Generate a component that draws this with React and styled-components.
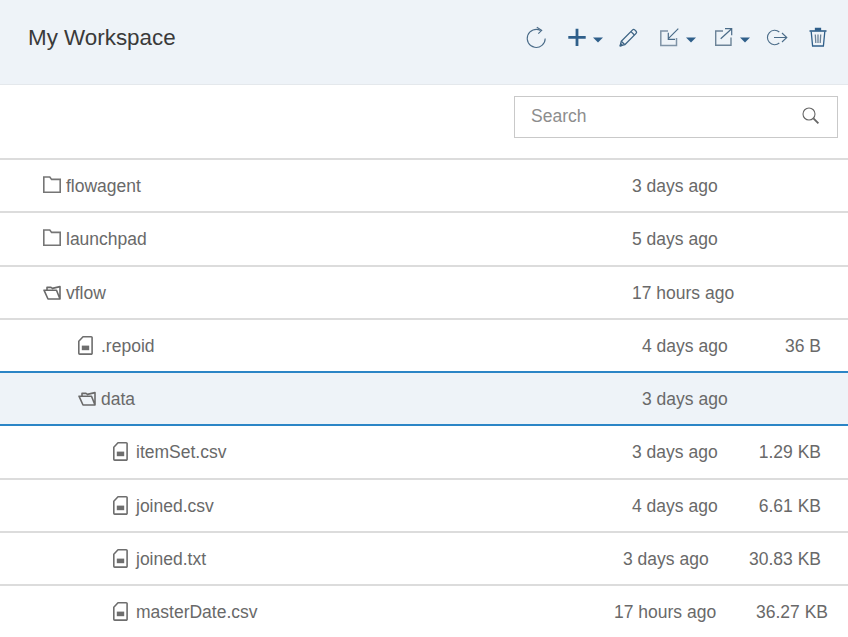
import React from "react";
import styled, { createGlobalStyle } from "styled-components";

const Global = createGlobalStyle`
  html, body { margin: 0; padding: 0; background: #fff; overflow: hidden; }
  body { font-family: "Liberation Sans", Arial, sans-serif; }
`;
const Page = styled.div`
  width: 848px; height: 637px; overflow: hidden; background: #fff;
`;
const Header = styled.header`
  height: 85px; box-sizing: border-box; background: #eef3f8;
  border-bottom: 1px solid #e4e8ec;
  display: flex; align-items: flex-start; justify-content: space-between;
  padding: 0 20px 0 28px;
`;
const Title = styled.h1`
  margin: 24px 0 0; font-size: 22.4px; line-height: 27px; font-weight: 400; color: #3a3a3a;
`;
const Toolbar = styled.div`
  display: flex; align-items: center; height: 20px; margin-top: 28px;
`;
const ToolButton = styled.span`
  display: inline-flex; align-items: center; margin-left: ${p => p.$gap || 0}px;
  svg { display: block; overflow: visible; }
`;
const CaretButton = styled(ToolButton)`
  margin-top: 4px;
`;
const SearchBar = styled.div`
  height: 75px; box-sizing: border-box; display: flex; justify-content: flex-end; align-items: flex-start;
  padding: 11px 10px 0 0; border-bottom: 2px solid #dcdcdc;
`;
const SearchBox = styled.div`
  width: 324px; height: 42px; box-sizing: border-box; border: 1px solid #c9c9c9;
  display: flex; align-items: center; justify-content: space-between; padding: 0 17px 2px 16px;
`;
const SearchInput = styled.input`
  border: 0; outline: 0; padding: 0; flex: 1; min-width: 0; background: transparent;
  font: 400 17.5px "Liberation Sans", Arial, sans-serif; color: #666;
  &::placeholder { color: #8d8d8d; opacity: 1; }
`;
const List = styled.div``;
const Row = styled.div`
  height: 53.25px; box-sizing: border-box; display: flex; align-items: center;
  padding-top: 2px; font-size: 17.5px; color: #696969;
  background: ${p => (p.$selected ? "#eef3f8" : "#fff")};
  border-bottom: 2px solid ${p => (p.$selected ? "#2b85c6" : "#dcdcdc")};
  ${p => p.$beforeSelected && "border-bottom-color: #2b85c6;"}
`;
const NameCell = styled.div`
  width: ${p => p.$dateX}px; flex: none; box-sizing: border-box; display: flex; align-items: center;
  padding-left: ${p => 43 + p.$depth * 35}px; white-space: nowrap;
  svg { display: block; flex: none; margin: 0 5px 3px 0; }
`;
const DateCell = styled.div`
  flex: none; white-space: nowrap;
`;
const SizeCell = styled.div`
  flex: 1; text-align: right; white-space: nowrap; padding-right: ${p => p.$right}px;
`;

const Caret = () => (
  <svg width="12" height="6" viewBox="0 0 12 6"><path d="M1 0.5h10L6 5.5z" fill="#2f5f8a" /></svg>
);
const Refresh = () => (
  <svg width="20" height="20" viewBox="0 0 20 20" fill="none" stroke="#4a6b88" strokeWidth="1.1">
    <path d="M13.6 2.6A9 9 0 1 0 18.2 10.5" />
    <path d="M9.8 -0.8L14.7 2.4 11.3 5.7" />
  </svg>
);
const Plus = () => (
  <svg width="22" height="20" viewBox="0 0 22 20" fill="none" stroke="#2f5f8a" strokeWidth="2.8">
    <path d="M2.3 9.3h17.4M11 .7V18" />
  </svg>
);
const Pencil = () => (
  <svg width="20" height="20" viewBox="0 0 20 20" fill="none" stroke="#3d6485" strokeWidth="1.3" strokeLinejoin="round">
    <path d="M2.2 17.8l1.1-4.6L14.6 1.9a1.5 1.5 0 0 1 2.1 0l1.4 1.4a1.5 1.5 0 0 1 0 2.1L6.8 16.7z" />
    <path d="M13 3.6l3.4 3.4M3.3 13.2l3.5 3.5" />
    <path d="M2.2 17.8l2-.5-1.5-1.5z" fill="#3d6485" />
  </svg>
);
const ImportIcon = () => (
  <svg width="20" height="20" viewBox="0 0 20 20" fill="none" strokeWidth="1.5">
    <path d="M10 3H2.8v14.4h15.7V10" stroke="#7f93a6" />
    <path d="M20.3 .7L10.3 10.7M10.3 4.7V11.3H17" stroke="#4a6b88" strokeWidth="1.2" />
  </svg>
);
const ExportIcon = () => (
  <svg width="20" height="20" viewBox="0 0 20 20" fill="none" stroke="#4a6b88" strokeWidth="1.2">
    <path d="M10 3H2.7v14.3H18V9.5" stroke="#6c8398" strokeWidth="1.4" />
    <path d="M7.7 10.7L18.7 .7M12 .7h6.7v6.6" />
  </svg>
);
const Logout = () => (
  <svg width="22" height="20" viewBox="0 0 22 20" fill="none" stroke="#4a6b88" strokeWidth="1.1">
    <path d="M13.3 4A7.2 7.2 0 1 0 13.3 15" />
    <path d="M8 9.5H20.8M16 5l4.8 4.5L16 14" />
  </svg>
);
const Trash = () => (
  <svg width="20" height="20" viewBox="0 0 20 20" fill="none" stroke="#2f5f8a" strokeWidth="1.3">
    <path d="M1.5 3h17" strokeWidth="1.6" />
    <path d="M7.5 2V.3h5V2z" fill="#2f5f8a" />
    <path d="M3.2 3.5L4.6 18h10.8l1.4-14.5" />
    <path d="M7.3 6.5l.5 8.5M10 6.5V15M12.7 6.5l-.5 8.5" stroke="#6b8298" />
  </svg>
);
const SearchIcon = () => (
  <svg width="18" height="18" viewBox="0 0 18 18" fill="none" stroke="#666">
    <circle cx="7" cy="7" r="6" strokeWidth="1.1" />
    <path d="M11.4 11.4l5 5" strokeWidth="1.8" />
  </svg>
);
const FolderClosed = () => (
  <svg width="18" height="18" viewBox="0 0 18 18" fill="none" stroke="#757575" strokeWidth="1.6">
    <path d="M.8 16.2V1h6l1.8 2.4h8.6v12.8z" />
  </svg>
);
const FolderOpen = () => (
  <svg width="18" height="18" viewBox="0 0 18 18" fill="none" stroke="#6a6a6a" strokeWidth="1.6" strokeLinejoin="round">
    <path d="M4 7V4.4h4l1.4 1 7.6-1.8V16H5L1 7.2h12.5L17 16" />
  </svg>
);
const FileIcon = () => (
  <svg width="18" height="20" viewBox="0 0 18 20" fill="none" stroke="#6e6e6e" strokeWidth="1.6">
    <path d="M5 1.8h8.2a.9.9 0 0 1 .9.9v15.5a.9.9 0 0 1-.9.9H1.7a.9.9 0 0 1-.9-.9V6.2z" strokeLinejoin="round" />
    <rect x="3.8" y="10.6" width="7.4" height="4.6" fill="#6e6e6e" stroke="none" />
  </svg>
);

const rows = [
  { name: "flowagent", kind: "closed", depth: 0, date: "3 days ago", dateX: 632 },
  { name: "launchpad", kind: "closed", depth: 0, date: "5 days ago", dateX: 632 },
  { name: "vflow", kind: "open", depth: 0, date: "17 hours ago", dateX: 632 },
  { name: ".repoid", kind: "file", depth: 1, date: "4 days ago", dateX: 642, size: "36 B", right: 27, beforeSelected: true },
  { name: "data", kind: "open", depth: 1, date: "3 days ago", dateX: 642, selected: true },
  { name: "itemSet.csv", kind: "file", depth: 2, date: "3 days ago", dateX: 632, size: "1.29 KB", right: 27 },
  { name: "joined.csv", kind: "file", depth: 2, date: "4 days ago", dateX: 632, size: "6.61 KB", right: 27 },
  { name: "joined.txt", kind: "file", depth: 2, date: "3 days ago", dateX: 623, size: "30.83 KB", right: 27 },
  { name: "masterDate.csv", kind: "file", depth: 2, date: "17 hours ago", dateX: 614, size: "36.27 KB", right: 20 },
];
const icons = { closed: FolderClosed, open: FolderOpen, file: FileIcon };

export default function App() {
  return (
    <Page>
      <Global />
      <Header>
        <Title>My Workspace</Title>
        <Toolbar>
          <ToolButton><Refresh /></ToolButton>
          <ToolButton $gap={19}><Plus /></ToolButton>
          <CaretButton $gap={4}><Caret /></CaretButton>
          <ToolButton $gap={14}><Pencil /></ToolButton>
          <ToolButton $gap={20}><ImportIcon /></ToolButton>
          <CaretButton $gap={7}><Caret /></CaretButton>
          <ToolButton $gap={16}><ExportIcon /></ToolButton>
          <CaretButton $gap={6}><Caret /></CaretButton>
          <ToolButton $gap={15}><Logout /></ToolButton>
          <ToolButton $gap={20}><Trash /></ToolButton>
        </Toolbar>
      </Header>
      <SearchBar>
        <SearchBox>
          <SearchInput placeholder="Search" />
          <SearchIcon />
        </SearchBox>
      </SearchBar>
      <List>
        {rows.map(r => {
          const Icon = icons[r.kind];
          return (
            <Row key={r.name} $selected={r.selected} $beforeSelected={r.beforeSelected}>
              <NameCell $dateX={r.dateX} $depth={r.depth}>
                <Icon />
                {r.name}
              </NameCell>
              <DateCell>{r.date}</DateCell>
              <SizeCell $right={r.right || 27}>{r.size}</SizeCell>
            </Row>
          );
        })}
      </List>
    </Page>
  );
}
